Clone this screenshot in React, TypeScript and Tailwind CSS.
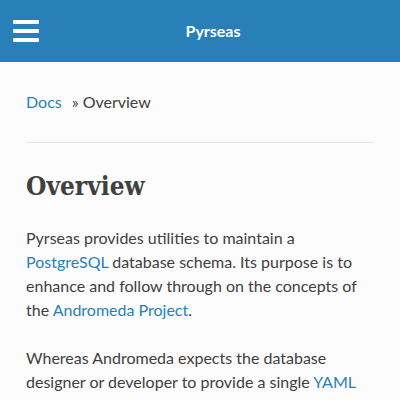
export default function App() {
  return (
    <div className="w-[400px] h-[400px] overflow-hidden bg-[#fcfcfc] text-[#404040] text-[16px] leading-[24px]" style={{ fontFamily: 'Lato, "Liberation Sans", sans-serif' }}>
      <div className="h-[62px] bg-[#2980b9] flex items-center px-[13px] text-white">
        <svg width="26" height="22" viewBox="0 0 26 22" className="shrink-0">
          <rect x="0" y="0" width="26" height="4" rx="1" fill="white" />
          <rect x="0" y="9" width="26" height="4" rx="1" fill="white" />
          <rect x="0" y="18" width="26" height="4" rx="1" fill="white" />
        </svg>
        <div className="flex-1 text-center font-bold pl-[0px]">Pyrseas</div>
        <div className="w-[0px]" />
      </div>
      <div className="px-[26px] pt-[28px]">
        <div className="flex items-center">
          <a className="text-[#2980b9]">Docs</a>
          <span className="ml-[10px]">» Overview</span>
        </div>
        <hr className="mt-[28px] border-0 h-px bg-[#e1e4e5]" />
        <h1 className="mt-[27px] text-[26px] leading-[32px] font-bold text-[#404040] font-stretch-condensed" style={{ fontFamily: '"DejaVu Serif Condensed", "DejaVu Serif", serif' }}>Overview</h1>
        <p className="mt-[24px]">
          Pyrseas provides utilities to maintain a <a className="text-[#2980b9]">PostgreSQL</a> database schema. Its purpose is to enhance and follow through on the concepts of the <a className="text-[#2980b9]">Andromeda Project</a>.
        </p>
        <p className="mt-[24px]">
          Whereas Andromeda expects the database designer or developer to provide a single <a className="text-[#2980b9]">YAML</a>
        </p>
      </div>
    </div>
  );
}
